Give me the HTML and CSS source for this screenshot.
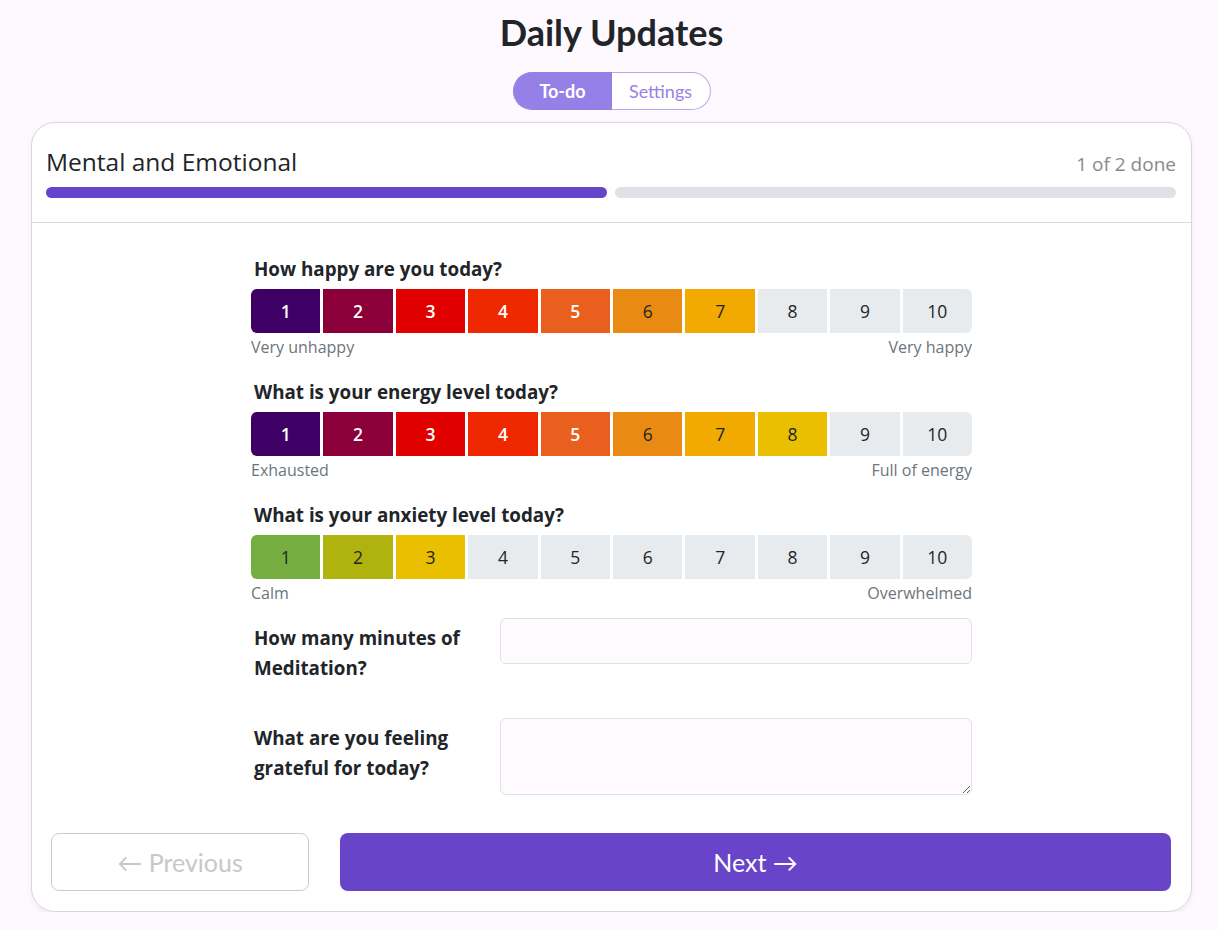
FILE: index.html
```html
<!DOCTYPE html>
<html lang="en">
<head>
<meta charset="utf-8">
<title>Daily Updates</title>
<link rel="stylesheet" href="styles.css">
</head>
<body>
<div class="page">
  <h1 class="title">Daily Updates</h1>
  <div class="tabs">
    <span class="tab tab-active">To-do</span>
    <span class="tab">Settings</span>
  </div>

  <div class="card">
    <div class="card-header">
      <div class="header-row">
        <h2 class="section-title">Mental and Emotional</h2>
        <span class="count">1 of 2 done</span>
      </div>
      <div class="progress">
        <span class="seg seg-done"></span>
        <span class="seg"></span>
      </div>
    </div>

    <div class="card-body">
      <div class="content">
        <div class="rating-block">
          <div class="question">How happy are you today?</div>
          <div class="scale">
            <span class="cell c-purple">1</span>
            <span class="cell c-wine">2</span>
            <span class="cell c-red">3</span>
            <span class="cell c-red2">4</span>
            <span class="cell c-orange">5</span>
            <span class="cell c-amber dark">6</span>
            <span class="cell c-gold dark">7</span>
            <span class="cell dark">8</span>
            <span class="cell dark">9</span>
            <span class="cell dark">10</span>
          </div>
          <div class="captions"><span>Very unhappy</span><span>Very happy</span></div>
        </div>

        <div class="rating-block">
          <div class="question">What is your energy level today?</div>
          <div class="scale">
            <span class="cell c-purple">1</span>
            <span class="cell c-wine">2</span>
            <span class="cell c-red">3</span>
            <span class="cell c-red2">4</span>
            <span class="cell c-orange">5</span>
            <span class="cell c-amber dark">6</span>
            <span class="cell c-gold dark">7</span>
            <span class="cell c-yellow dark">8</span>
            <span class="cell dark">9</span>
            <span class="cell dark">10</span>
          </div>
          <div class="captions"><span>Exhausted</span><span>Full of energy</span></div>
        </div>

        <div class="rating-block">
          <div class="question">What is your anxiety level today?</div>
          <div class="scale">
            <span class="cell c-green dark">1</span>
            <span class="cell c-olive dark">2</span>
            <span class="cell c-yellow dark">3</span>
            <span class="cell dark">4</span>
            <span class="cell dark">5</span>
            <span class="cell dark">6</span>
            <span class="cell dark">7</span>
            <span class="cell dark">8</span>
            <span class="cell dark">9</span>
            <span class="cell dark">10</span>
          </div>
          <div class="captions"><span>Calm</span><span>Overwhelmed</span></div>
        </div>

        <div class="form-row row-input">
          <label class="form-label" for="med">How many minutes of Meditation?</label>
          <input id="med" class="field" type="text">
        </div>

        <div class="form-row row-text">
          <label class="form-label" for="grat">What are you feeling grateful for today?</label>
          <textarea id="grat" class="field field-area"></textarea>
        </div>
      </div>
    </div>

    <div class="card-footer">
      <button class="btn btn-prev" type="button">← Previous</button>
      <button class="btn btn-next" type="button">Next →</button>
    </div>
  </div>
</div>
</body>
</html>
```

FILE: styles.css
```css
* { box-sizing: border-box; }

html, body {
  margin: 0;
  padding: 0;
  background: #fef9fe;
  font-family: "Open Sans", "Noto Sans", sans-serif;
  color: #212529;
}

.page {
  padding: 0 26px 0 31px;
}

.title {
  margin: 0;
  padding-top: 10px;
  font-family: Lato, "Open Sans", sans-serif;
  font-size: 36px;
  line-height: 44px;
  font-weight: 700;
  text-align: center;
  color: #212529;
}

.tabs {
  display: flex;
  justify-content: center;
  margin-top: 18px;
}

.tab {
  width: 99px;
  height: 38px;
  display: flex;
  align-items: center;
  justify-content: center;
  font-family: Lato, "Open Sans", sans-serif;
  font-size: 18px;
  color: #9a80e6;
  background: #fff;
  border: 1px solid #b9a6ee;
}

.tab:first-child {
  border-radius: 19px 0 0 19px;
  border-right: none;
}

.tab:last-child {
  border-radius: 0 19px 19px 0;
  border-left: none;
}

.tab-active {
  background: #9580e8;
  border-color: #9580e8;
  color: #fff;
  font-weight: 700;
}

.card {
  margin-top: 12px;
  background: #fff;
  border: 1px solid #d8d8d8;
  border-radius: 24px;
  box-shadow: 0 2px 6px rgba(0, 0, 0, 0.06);
}

.card-header {
  padding: 22px 15px 24px 14px;
  border-bottom: 1px solid #d9d9d9;
}

.header-row {
  display: flex;
  justify-content: space-between;
  align-items: baseline;
}

.section-title {
  margin: 0;
  font-size: 24.5px;
  line-height: 34px;
  font-weight: 400;
  color: #212529;
}

.count {
  font-size: 19px;
  font-weight: 400;
  color: #8a8a8a;
}

.progress {
  display: flex;
  gap: 8px;
  margin-top: 8px;
}

.seg {
  flex: 1;
  height: 11px;
  border-radius: 6px;
  background: #dee1e5;
}

.seg-done {
  background: #6744cc;
}

.card-body {
  padding: 34px 0 38px;
}

.content {
  width: 721px;
  margin: 0 auto;
}

.rating-block + .rating-block {
  margin-top: 21px;
}

.question {
  padding-left: 3px;
  font-size: 18.8px;
  line-height: 24px;
  font-weight: 700;
  color: #212529;
}

.scale {
  display: flex;
  gap: 3px;
  margin-top: 8px;
}

.cell {
  flex: 1;
  height: 44px;
  display: flex;
  align-items: center;
  justify-content: center;
  font-size: 17.5px;
  font-weight: 600;
  color: #fff;
  background: #e8ebee;
}

.cell.dark {
  color: #212529;
  font-weight: 500;
}

.cell:first-child { border-radius: 6px 0 0 6px; }
.cell:last-child { border-radius: 0 6px 6px 0; }

.c-purple { background: #3f0066; }
.c-wine { background: #8b0038; }
.c-red { background: #e00000; }
.c-red2 { background: #f02800; }
.c-orange { background: #e95f1d; }
.c-amber { background: #e98b12; }
.c-gold { background: #f2aa00; }
.c-yellow { background: #e9bf00; }
.c-green { background: #75ad41; }
.c-olive { background: #b0b20d; }

.captions {
  display: flex;
  justify-content: space-between;
  margin-top: 2px;
  font-size: 16px;
  line-height: 24px;
  color: #6c757d;
}

.form-row {
  display: grid;
  grid-template-columns: 249px 1fr;
  align-items: start;
}

.row-input {
  margin-top: 13px;
  height: 100px;
}

.form-label {
  padding: 5px 0 0 3px;
  font-size: 18.8px;
  line-height: 30px;
  font-weight: 700;
  color: #212529;
}

.field {
  display: block;
  width: 100%;
  height: 46px;
  margin: 0;
  padding: 6px 12px;
  border: 1px solid #dee2e6;
  border-radius: 6px;
  background: #fefafe;
  font-family: inherit;
  font-size: 16px;
}

.field-area {
  height: 77px;
  resize: vertical;
}

.card-footer {
  display: flex;
  gap: 31px;
  padding: 0 20px 20px 19px;
}

.btn {
  height: 58px;
  border-radius: 8px;
  font-family: Lato, "Open Sans", sans-serif;
  font-size: 25px;
  cursor: pointer;
}

.btn-prev {
  width: 258px;
  background: #fff;
  border: 1px solid #cccccc;
  color: #c8c8c8;
}

.btn-next {
  flex: 1;
  background: #6744c8;
  border: none;
  color: #fff;
}
```
